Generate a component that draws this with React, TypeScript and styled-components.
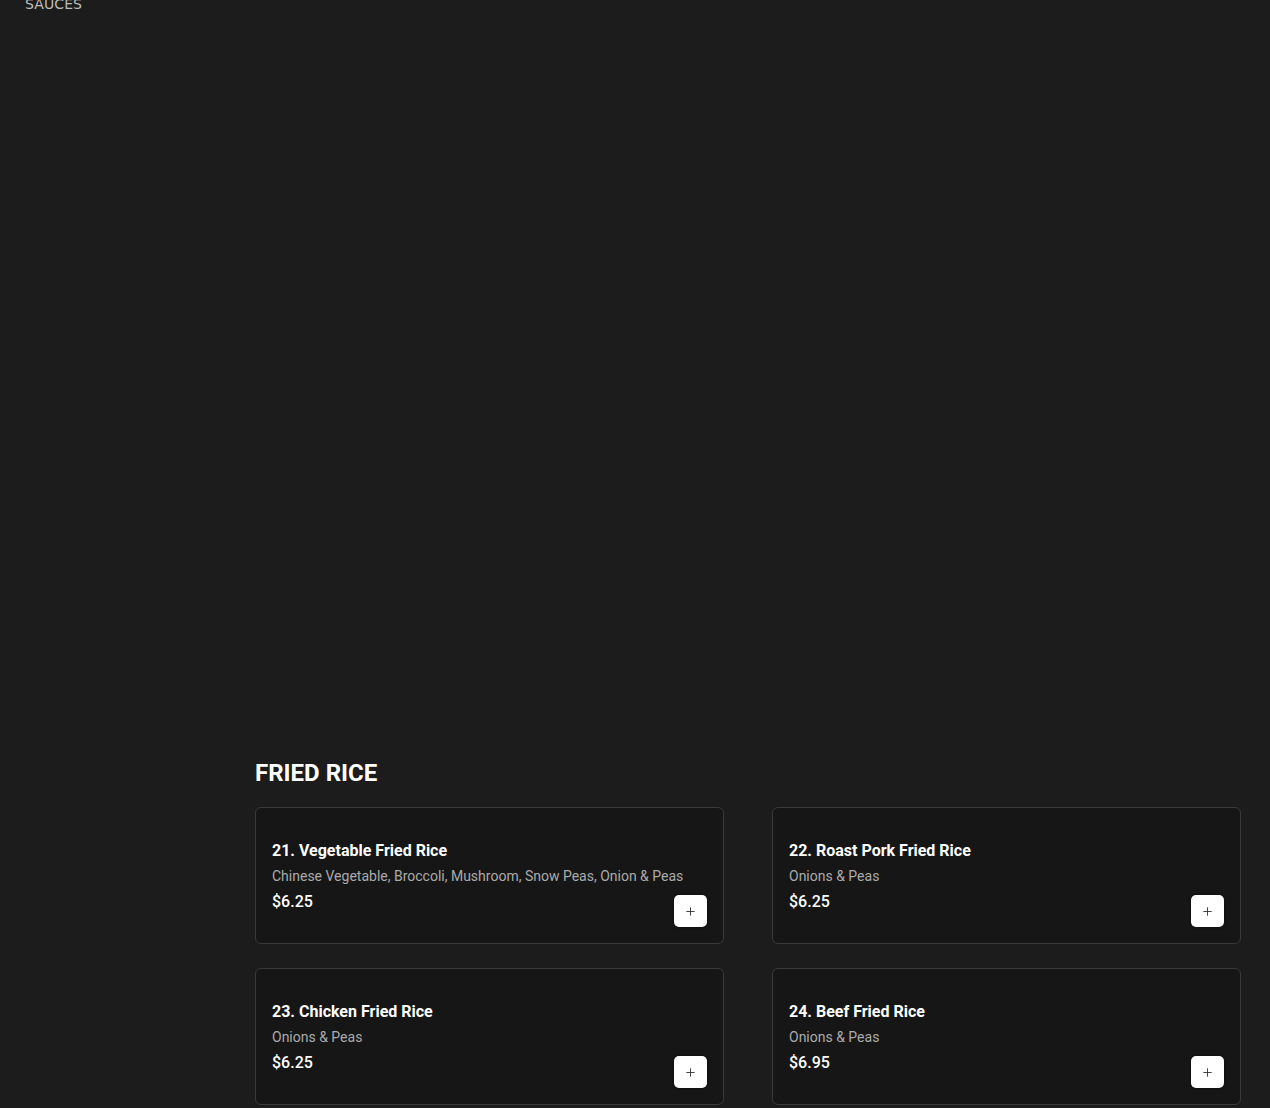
import styled, { createGlobalStyle } from "styled-components";
import { Plus } from "lucide-react";

const GlobalStyle = createGlobalStyle`
  html, body {
    margin: 0;
    padding: 0;
    background: #1c1c1c;
  }
  body {
    font-family: Roboto, "Liberation Sans", sans-serif;
    color: #ffffff;
    overflow: hidden;
  }
`;

const Page = styled.div`
  display: flex;
  min-height: 1108px;
`;

const Sidebar = styled.nav`
  width: 255px;
  flex-shrink: 0;
  box-sizing: border-box;
  padding-left: 25px;
`;

const CategoryLink = styled.div`
  margin-top: -4px;
  font-family: "DejaVu Sans", sans-serif;
  font-size: 14px;
  color: #bdbdbd;
  letter-spacing: 0.1px;
`;

const Main = styled.main`
  flex: 1;
  padding-right: 29px;
  min-width: 0;
`;

const PendingSection = styled.div`
  height: 759px;
`;

const Section = styled.section``;

const SectionTitle = styled.h2`
  margin: 0 0 20px;
  font-size: 24px;
  line-height: 28px;
  font-weight: 700;
  color: #ffffff;
`;

const Grid = styled.div`
  display: grid;
  grid-template-columns: 1fr 1fr;
  column-gap: 48px;
  row-gap: 24px;
`;

const Card = styled.div`
  background: #161616;
  border: 1px solid #3a3a3a;
  border-radius: 6px;
  padding: 33px 16px 16px;
  display: flex;
  flex-direction: column;
`;

const ItemName = styled.div`
  font-size: 16px;
  line-height: 20px;
  font-weight: 700;
  color: #ffffff;
`;

const ItemDesc = styled.div`
  margin-top: 5px;
  font-size: 14px;
  line-height: 20px;
  color: #ababab;
`;

const Footer = styled.div`
  margin-top: 6px;
  display: flex;
  justify-content: space-between;
  align-items: flex-start;
`;

const Price = styled.div`
  font-size: 16px;
  line-height: 20px;
  font-weight: 500;
  color: #ffffff;
`;

const AddButton = styled.button`
  margin-top: 3px;
  width: 33px;
  height: 32px;
  border: none;
  border-radius: 5px;
  background: #ffffff;
  color: #2a2a2a;
  display: grid;
  place-items: center;
  padding: 0;
  box-shadow: 0 0 3px rgba(0, 0, 0, 0.6);
  cursor: pointer;
`;

const items = [
  {
    name: "21. Vegetable Fried Rice",
    desc: "Chinese Vegetable, Broccoli, Mushroom, Snow Peas, Onion & Peas",
    price: "$6.25",
  },
  { name: "22. Roast Pork Fried Rice", desc: "Onions & Peas", price: "$6.25" },
  { name: "23. Chicken Fried Rice", desc: "Onions & Peas", price: "$6.25" },
  { name: "24. Beef Fried Rice", desc: "Onions & Peas", price: "$6.95" },
];

export default function App() {
  return (
    <>
      <GlobalStyle />
      <Page>
        <Sidebar>
          <CategoryLink>SAUCES</CategoryLink>
        </Sidebar>
        <Main>
          <PendingSection />
          <Section>
            <SectionTitle>FRIED RICE</SectionTitle>
            <Grid>
              {items.map((item) => (
                <Card key={item.name}>
                  <ItemName>{item.name}</ItemName>
                  <ItemDesc>{item.desc}</ItemDesc>
                  <Footer>
                    <Price>{item.price}</Price>
                    <AddButton aria-label="Add">
                      <Plus size={13} strokeWidth={1.6} />
                    </AddButton>
                  </Footer>
                </Card>
              ))}
            </Grid>
          </Section>
        </Main>
      </Page>
    </>
  );
}
